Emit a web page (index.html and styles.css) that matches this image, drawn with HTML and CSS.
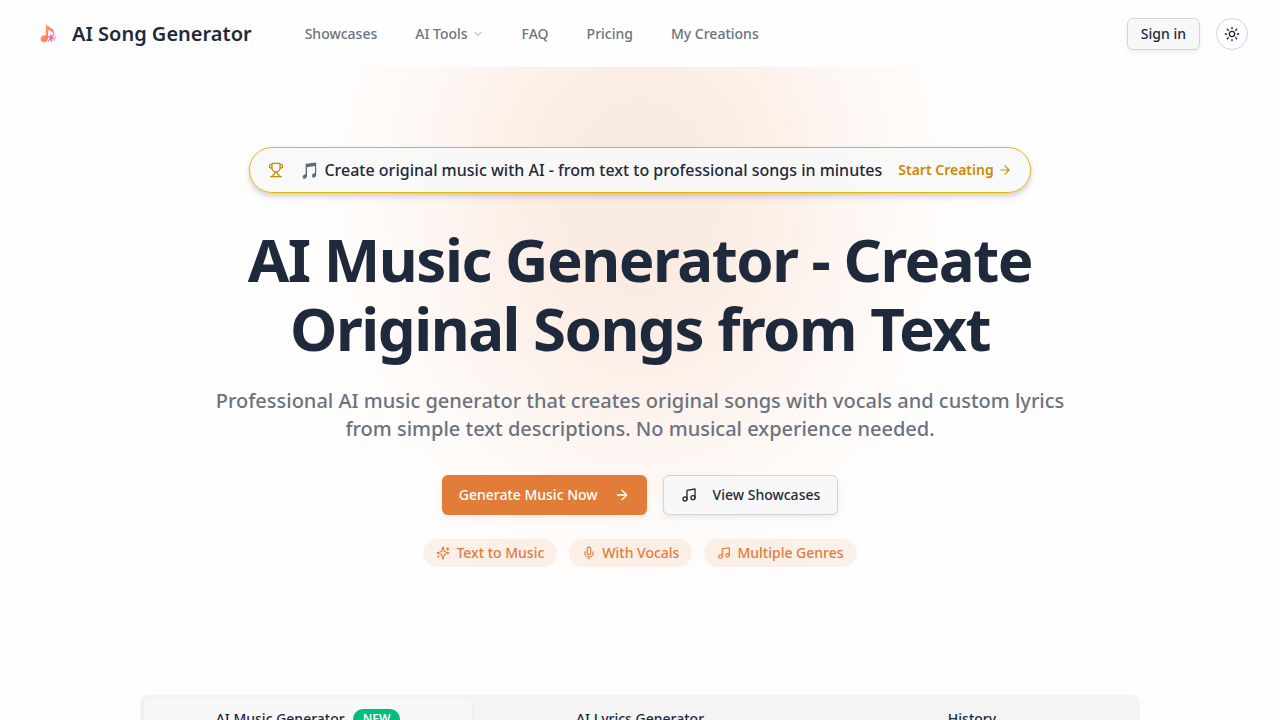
FILE: index.html
```html
<!DOCTYPE html>
<html lang="en">
<head>
<meta charset="utf-8">
<meta name="viewport" content="width=device-width, initial-scale=1">
<title>AI Song Generator</title>
<link rel="stylesheet" href="styles.css">
</head>
<body>
<svg class="defs" aria-hidden="true">
  <symbol id="arrow" viewBox="0 0 24 24"><path d="M5 12h14M12 5l7 7-7 7"/></symbol>
  <symbol id="music" viewBox="0 0 24 24"><path d="M9 18V5l12-2v13"/><circle cx="6" cy="18" r="3"/><circle cx="18" cy="16" r="3"/></symbol>
</svg>
<header class="header">
  <a class="brand" href="#">
    <svg class="logo" viewBox="0 0 32 32" aria-hidden="true">
      <defs><linearGradient id="note" x1="0" y1="0" x2="1" y2="1"><stop offset="0" stop-color="#ffb35c"/><stop offset=".55" stop-color="#ff8a5c"/><stop offset="1" stop-color="#ff5f7b"/></linearGradient></defs>
      <path fill="url(#note)" d="M13 2C15 7 23 7 24 13V17C22 12 18 11 16 11V21C16 28 6 29 6 23C6 18 10 17 13 18Z"/>
      <g fill="none" stroke="#fa5fa5" stroke-width="1.8" stroke-linecap="round"><path d="M16 20h3M20 17v3l3-2M20 21l4 1M19 22l-2 3M20 22l1 4"/><path d="M24 16v0M26 20v0M25 24v0"/></g>
    </svg>
    <span>AI Song Generator</span>
  </a>
  <nav class="nav">
    <a href="#showcases">Showcases</a>
    <button type="button">AI Tools <svg class="icon chevron" viewBox="0 0 24 24" aria-hidden="true"><path d="m6 9 6 6 6-6"/></svg></button>
    <a href="#faq">FAQ</a>
    <a href="#pricing">Pricing</a>
    <a href="#creations">My Creations</a>
  </nav>
  <div class="actions">
    <button class="sign-in" type="button">Sign in</button>
    <button class="theme" type="button" aria-label="Toggle theme"><svg class="icon" viewBox="0 0 24 24" aria-hidden="true"><circle cx="12" cy="12" r="4"/><path d="M12 2v2M12 20v2M4.93 4.93l1.41 1.41M17.66 17.66l1.41 1.41M2 12h2M20 12h2M6.34 17.66l-1.41 1.41M19.07 4.93l-1.41 1.41"/></svg></button>
  </div>
</header>
<main>
  <section class="hero">
    <div class="announcement">
      <svg class="icon trophy" viewBox="0 0 24 24" aria-hidden="true"><path d="M6 9H4.5a2.5 2.5 0 0 1 0-5H6M18 9h1.5a2.5 2.5 0 0 0 0-5H18M4 22h16M10 14.66V17c0 .55-.47.98-.97 1.21C7.85 18.75 7 20.24 7 22M14 14.66V17c0 .55.47.98.97 1.21C16.15 18.75 17 20.24 17 22M18 2H6v7a6 6 0 0 0 12 0V2Z"/></svg>
      <span>🎵 Create original music with AI - from text to professional songs in minutes</span>
      <a href="#generator">Start Creating <svg class="icon small" aria-hidden="true"><use href="#arrow"/></svg></a>
    </div>
    <h1>AI Music Generator - Create Original Songs from Text</h1>
    <p class="lead">Professional AI music generator that creates original songs with vocals and custom lyrics from simple text descriptions. No musical experience needed.</p>
    <div class="cta">
      <a class="button primary" href="#generator">Generate Music Now <svg class="icon" aria-hidden="true"><use href="#arrow"/></svg></a>
      <a class="button secondary" href="#showcases"><svg class="icon" aria-hidden="true"><use href="#music"/></svg> View Showcases</a>
    </div>
    <ul class="features">
      <li><svg class="icon small" viewBox="0 0 24 24" aria-hidden="true"><path d="M9.94 15.5A2 2 0 0 0 8.5 14.06l-6.14-1.58a.5.5 0 0 1 0-.96L8.5 9.94A2 2 0 0 0 9.94 8.5l1.58-6.14a.5.5 0 0 1 .96 0l1.58 6.14a2 2 0 0 0 1.44 1.44l6.14 1.58a.5.5 0 0 1 0 .96l-6.14 1.58a2 2 0 0 0-1.44 1.44l-1.58 6.14a.5.5 0 0 1-.96 0zM20 3v4M22 5h-4M4 17v2M5 18H3"/></svg>Text to Music</li>
      <li><svg class="icon small" viewBox="0 0 24 24" aria-hidden="true"><path d="M12 2a3 3 0 0 0-3 3v7a3 3 0 0 0 6 0V5a3 3 0 0 0-3-3ZM19 10v2a7 7 0 0 1-14 0v-2M12 19v3"/></svg>With Vocals</li>
      <li><svg class="icon small" aria-hidden="true"><use href="#music"/></svg>Multiple Genres</li>
    </ul>
  </section>
  <section class="generator" id="generator">
    <div class="tabs" role="tablist">
      <button class="active" type="button" role="tab" aria-selected="true">AI Music Generator <span class="badge">NEW</span></button>
      <button type="button" role="tab" aria-selected="false">AI Lyrics Generator</button>
      <button type="button" role="tab" aria-selected="false">History</button>
    </div>
  </section>
</main>
</body>
</html>
```

FILE: styles.css
```css
:root {
  --ink: #1e293b;
  --muted: #6b7280;
  --orange: #e27c39;
  --surface: #f8f8f8;
  --border: #d1d5db;
  --shadow: 0 2px 4px rgb(0 0 0 / 4%), 0 4px 8px rgb(0 0 0 / 3%);
}

* { box-sizing: border-box; }

html, body { overflow: hidden; }

body {
  margin: 0;
  height: 100vh;
  background: #fefefe;
  color: var(--ink);
  font: 500 14px/20px "Noto Sans", sans-serif;
}

button { font: inherit; color: inherit; border: 0; background: none; padding: 0; }
a { color: inherit; text-decoration: none; }

.defs { display: none; }

.icon {
  width: 16px;
  height: 16px;
  flex: none;
  fill: none;
  stroke: currentColor;
  stroke-width: 2;
  stroke-linecap: round;
  stroke-linejoin: round;
}

.icon.small { width: 14px; height: 14px; }
.icon.chevron { width: 12px; height: 12px; opacity: .7; }

.header {
  display: flex;
  align-items: center;
  gap: 53px;
  padding: 18px 32px 17px 36px;
}

.brand {
  display: flex;
  align-items: center;
  gap: 12px;
  font-size: 20px;
  line-height: 28px;
  font-weight: 600;
}

.logo { width: 24px; height: 24px; }

.nav { display: flex; align-items: center; gap: 38px; color: var(--muted); }
.nav button { display: flex; align-items: center; gap: 4px; }

.actions { display: flex; gap: 16px; margin-left: auto; }

.sign-in {
  height: 32px;
  padding: 0 13px;
  border: 1px solid var(--border);
  border-radius: 6px;
  background: var(--surface);
  box-shadow: var(--shadow);
}

.theme {
  display: grid;
  place-items: center;
  width: 32px;
  height: 32px;
  border: 1px solid var(--border);
  border-radius: 50%;
}

.hero {
  display: flex;
  flex-direction: column;
  align-items: center;
  padding: 80px 32px 128px;
  text-align: center;
  background: radial-gradient(ellipse 370px 460px at 50% 130px, #faebe2 0%, #fbece3 20%, #fcf0e8 38%, #fdf5f0 53%, #fefaf7 70%, #fefdfc 85%, #fefefe 100%);
}

.announcement {
  display: flex;
  align-items: center;
  gap: 16px;
  padding: 10px 18px;
  border: 1px solid #eab308;
  border-radius: 999px;
  background: rgb(248 248 248 / 90%);
  box-shadow: 0 4px 6px rgb(0 0 0 / 12%), 0 2px 4px rgb(0 0 0 / 8%);
  font-size: 16px;
  line-height: 24px;
}

.announcement a {
  display: flex;
  align-items: center;
  gap: 4px;
  color: #ca8a04;
  font-size: 14px;
  font-weight: 600;
}

.trophy { color: #ca8a04; }

h1 {
  max-width: 896px;
  margin: 32px 0 0;
  font-size: 60px;
  line-height: 69px;
  font-weight: 700;
  letter-spacing: -0.025em;
}

.lead {
  max-width: 896px;
  margin: 24px 0 32px;
  color: var(--muted);
  font-size: 20px;
  line-height: 28px;
}

.cta { display: flex; gap: 16px; }

.button {
  display: flex;
  align-items: center;
  gap: 16px;
  height: 40px;
  padding: 0 17px;
  border-radius: 6px;
  box-shadow: var(--shadow);
}

.primary { background: var(--orange); color: #fff; }
.secondary { border: 1px solid var(--border); background: var(--surface); }

.features { display: flex; gap: 12px; margin: 24px 0 0; padding: 0; list-style: none; color: var(--orange); }

.features li {
  display: flex;
  align-items: center;
  gap: 6px;
  padding: 4px 13px;
  border-radius: 999px;
  background: rgb(226 124 57 / 10%);
}

.generator { padding: 0 32px; }

.tabs {
  display: grid;
  grid-template-columns: repeat(3, 1fr);
  gap: 4px;
  max-width: 1000px;
  margin: 0 auto;
  padding: 4px;
  border-radius: 8px;
  background: #f4f4f4;
}

.tabs button {
  display: flex;
  align-items: center;
  justify-content: center;
  gap: 8px;
  height: 40px;
  border-radius: 6px;
}

.tabs .active { background: var(--surface); box-shadow: var(--shadow); }

.badge {
  padding: 2px 10px;
  border-radius: 999px;
  background: #00bc7d;
  color: #fff;
  font-size: 12px;
  line-height: 16px;
  font-weight: 600;
}
```
